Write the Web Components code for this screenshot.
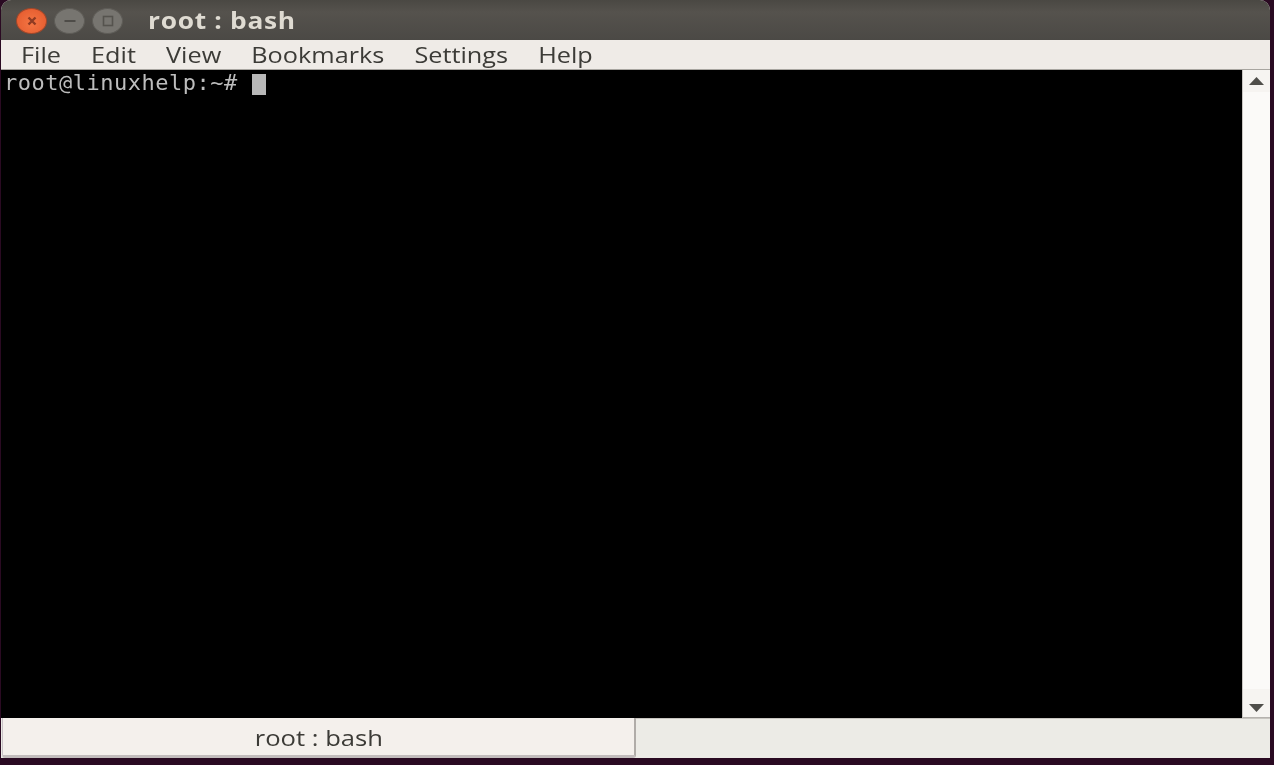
<!DOCTYPE html>
<html><head><meta charset="utf-8"><style>
html,body{margin:0;padding:0;height:765px;overflow:hidden;background:#2a0a22;}
body{display:flex;flex-direction:column;}
</style></head><body>
<term-window>
  <title-bar slot="title" label="root : bash"></title-bar>
  <menu-bar slot="menu">
    <span>File</span><span>Edit</span><span>View</span><span>Bookmarks</span><span>Settings</span><span>Help</span>
  </menu-bar>
  <term-screen slot="screen" prompt="root@linuxhelp:~#"></term-screen>
  <tab-bar slot="tabs" label="root : bash"></tab-bar>
</term-window>
<script>
function def(name,html){customElements.define(name,class extends HTMLElement{connectedCallback(){if(this.shadowRoot)return;const r=this.attachShadow({mode:'open'});r.innerHTML=html(this);}});}
def('term-window',()=>`<style>
:host{display:flex;flex-direction:column;width:1269px;height:758px;margin:0 0 0 1px;border-radius:10px 10px 0 0;overflow:hidden;background:#efebe7;}
</style><slot name="title"></slot><slot name="menu"></slot><slot name="screen"></slot><slot name="tabs"></slot>`);
def('title-bar',h=>`<style>
:host{display:flex;align-items:center;height:40px;flex:none;box-sizing:border-box;padding:2px 0 0 15px;background:linear-gradient(#4a4843,#55524d 30%,#4b4945);}
.c{width:31px;height:26px;border-radius:50%;display:flex;align-items:center;justify-content:center;box-sizing:border-box;background:#777570;border:1px solid #5f5d58;filter:blur(.6px)}
.x{background:radial-gradient(circle at 50% 60%,#f47543,#e2572b);border-color:#a5482a}
svg{display:block}
.t{font:700 22.5px/1 "Open Sans","Noto Sans",sans-serif;color:#dfdbd2;margin-left:25px;letter-spacing:.6px;transform:scaleX(1.17);transform-origin:left center;filter:blur(.5px)}
.row{display:flex;align-items:center;gap:7px}
</style>
<div class="row">
<div class="c x"><svg width="14" height="12" viewBox="0 0 14 12"><path d="M3.5 2.5 10.5 9.5M10.5 2.5 3.5 9.5" stroke="#8f3a22" stroke-width="2.4"/></svg></div>
<div class="c"><svg width="14" height="12" viewBox="0 0 14 12"><path d="M1.5 6H12.5" stroke="#4e4c48" stroke-width="2"/></svg></div>
<div class="c"><svg width="14" height="12" viewBox="0 0 14 12"><rect x="2.5" y="1.5" width="9" height="9" fill="none" stroke="#55534e" stroke-width="1.6"/></svg></div>
</div><span class="t">${h.getAttribute('label')}</span>`);
def('menu-bar',()=>`<style>
:host{display:flex;height:30px;flex:none;box-sizing:border-box;padding:0 0 0 20px;align-items:center;background:#efebe7;border-bottom:1px solid #a8a5a0;color:#3c3b37;font:500 21.5px/1 "Open Sans","Noto Sans",sans-serif;}
.row{display:flex;gap:25.6px;transform:scaleX(1.175);transform-origin:left center;filter:blur(.5px)}
::slotted(span){display:block}
</style><div class="row"><slot></slot></div>`);
def('term-screen',h=>`<style>
:host{display:flex;flex:1;min-height:0;}
.s{flex:1;background:#000;padding:1px 0 0 3px;color:#bdbdbd;font:22px/24px "DejaVu Sans Mono",monospace;letter-spacing:.5px;display:flex;align-items:flex-start;gap:14px}
.p{filter:blur(.5px)}
.cur{width:14px;height:21px;background:#b8b8b8;margin-top:3px}
.bar{width:28px;flex:none;display:flex;flex-direction:column;background:#f6f4f1;box-sizing:border-box;border-bottom:1px solid #b5b2ae;border-left:1px solid #c9c6c2}
.btn{height:22px;display:flex;align-items:center;justify-content:center}
.btn.d{height:28px;align-items:flex-end;box-sizing:border-box;padding-bottom:5px}
.track{flex:1;background:#fbfaf8}
</style><div class="s"><span class="p">${h.getAttribute('prompt')}</span><span class="cur"></span></div>
<div class="bar"><div class="btn"><svg width="15" height="8" viewBox="0 0 15 8"><path d="M7.5 0 15 8H0Z" fill="#4f4e4a"/></svg></div><div class="track"></div><div class="btn d"><svg width="15" height="8" viewBox="0 0 15 8"><path d="M0 0H15L7.5 8Z" fill="#4f4e4a"/></svg></div></div>`);
def('tab-bar',h=>`<style>
:host{display:flex;height:40px;flex:none;box-sizing:border-box;background:#ecebe6;}
.tab{width:634px;box-sizing:border-box;margin-left:1px;background:#f4f0ec;border-right:2px solid #b0aca8;border-bottom:3px solid #c2bcbc;border-left:1px solid #c9c2c6;border-radius:0 0 3px 3px;display:flex;align-items:center;justify-content:center;padding-top:2px;color:#3c3b37;font:500 21.5px/1 "Open Sans","Noto Sans",sans-serif;}
.tab span{transform:scaleX(1.19);filter:blur(.5px)}
.rest{flex:1;border-top:1px solid #c8c5c0;background:#ecebe6}
</style><div class="tab"><span>${h.getAttribute('label')}</span></div><div class="rest"></div>`);
</script>
</body></html>
